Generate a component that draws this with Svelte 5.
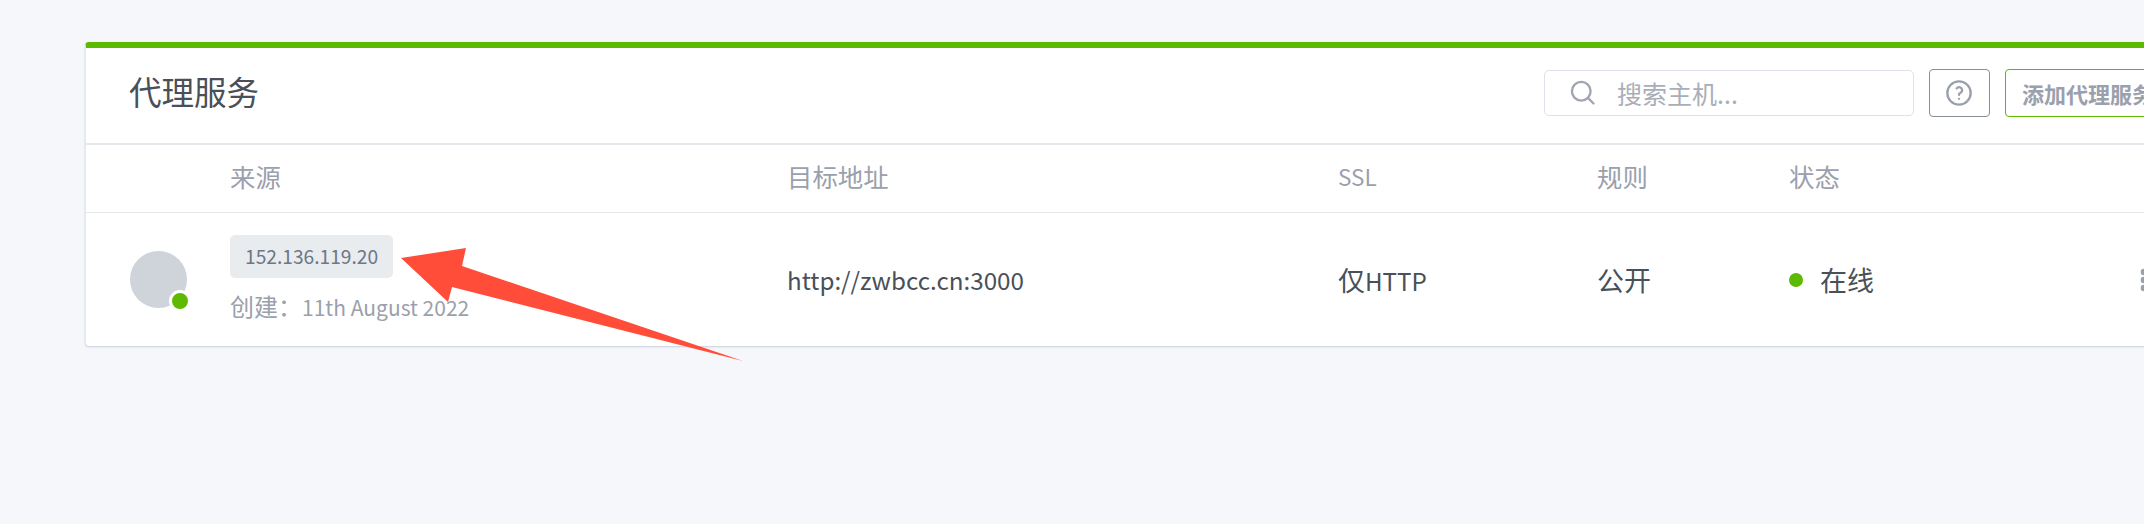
<script>
  const columns = [
    { key: 'avatar', label: '' },
    { key: 'source', label: '来源' },
    { key: 'target', label: '目标地址' },
    { key: 'ssl', label: 'SSL' },
    { key: 'rules', label: '规则' },
    { key: 'status', label: '状态' },
    { key: 'menu', label: '' }
  ];

  const host = {
    source: '152.136.119.20',
    created: '11th August 2022',
    target: 'http://zwbcc.cn:3000',
    rules: '公开',
    status: '在线'
  };
</script>

<div class="page">
  <section class="card">
    <header class="card-header">
      <h1 class="title">代理服务</h1>
      <div class="tools">
        <label class="search">
          <svg class="search-icon" viewBox="0 0 24 24" width="28" height="28" fill="none" stroke="currentColor" stroke-width="2" stroke-linecap="round" stroke-linejoin="round">
            <circle cx="10.5" cy="10.5" r="8" />
            <path d="M21 21l-4.8-4.8" />
          </svg>
          <input type="text" placeholder="搜索主机..." />
        </label>
        <button class="help" aria-label="帮助">
          <svg viewBox="0 0 24 24" width="28" height="28" fill="none" stroke="currentColor" stroke-width="2" stroke-linecap="round" stroke-linejoin="round">
            <circle cx="12" cy="12" r="10" />
            <path d="M12 17v.01" />
            <path d="M12 13.5a1.5 1.5 0 0 1 1-1.5 2.6 2.6 0 1 0-3-4" />
          </svg>
        </button>
        <button class="add">添加代理服务</button>
      </div>
    </header>

    <div class="row head">
      {#each columns as col}
        <div class="th" class:latin={col.key === 'ssl'}>{col.label}</div>
      {/each}
    </div>

    <div class="row body">
      <div class="cell">
        <span class="avatar"><span class="avatar-dot"></span></span>
      </div>
      <div class="cell source">
        <span class="tag">{host.source}</span>
        <span class="created"><span class="cjk-sm">创建：</span>{host.created}</span>
      </div>
      <div class="cell">{host.target}</div>
      <div class="cell"><span class="cjk">仅</span>HTTP</div>
      <div class="cell cjk">{host.rules}</div>
      <div class="cell status"><span class="dot"></span><span class="cjk">{host.status}</span></div>
      <div class="cell menu">
        <svg viewBox="0 0 8 24" width="8" height="24" fill="currentColor">
          <circle cx="4" cy="4" r="3.3" />
          <circle cx="4" cy="12" r="3.3" />
          <circle cx="4" cy="20" r="3.3" />
        </svg>
      </div>
    </div>
  </section>

  <!-- annotation drawn over the screenshot -->
  <svg class="arrow" viewBox="0 0 2144 524" width="2144" height="524">
    <polygon points="401,258 466,248 462,266 743,361 452,287 448,302" fill="#ff4d3a" />
  </svg>
</div>

<style>
  :global(body) {
    margin: 0;
    background: #f5f7fb;
  }

  .page {
    position: relative;
    height: 524px;
    overflow: hidden;
    padding: 42px 0 0 85px;
    box-sizing: border-box;
    font-family: "Noto Sans CJK SC", "Noto Sans", sans-serif;
    color: #495057;
  }

  .card {
    width: 2122px;
    background: #fff;
    border-top: 6px solid #5eba00;
    border-radius: 4px;
    box-shadow: 0 1px 2px rgba(110, 120, 140, 0.3);
    border-left: 1px solid #e4e7ec;
    box-sizing: border-box;
  }

  .card-header {
    height: 97px;
    display: flex;
    align-items: center;
    justify-content: space-between;
    padding: 0 36px 10px 43px;
    box-sizing: border-box;
    border-bottom: 2px solid #e4e7ec;
  }

  .title {
    margin: 0;
    font-size: 32.5px;
    font-weight: 400;
    color: #495057;
  }

  .tools {
    display: flex;
    align-items: center;
    gap: 15px;
    margin-top: 4px;
  }

  .search {
    width: 370px;
    height: 46px;
    display: flex;
    align-items: center;
    gap: 20px;
    padding-left: 24px;
    box-sizing: border-box;
    border: 1px solid #dee2e8;
    border-radius: 5px;
    color: #a0a5b1;
  }

  .search-icon { flex: none; }

  .search input {
    flex: 1;
    min-width: 0;
    border: 0;
    outline: 0;
    background: none;
    font: inherit;
    font-size: 25px;
    padding: 0;
  }
  .search input::placeholder { color: #a9aeb8; opacity: 1; }

  .help {
    width: 61px;
    height: 48px;
    display: flex;
    align-items: center;
    justify-content: center;
    padding: 0;
    background: #fff;
    border: 1px solid #868e96;
    border-radius: 4px;
    color: #9aa0ac;
  }

  .add {
    height: 48px;
    padding: 0 16px;
    background: #fff;
    border: 1px solid #5eba00;
    border-radius: 4px;
    color: #9aa0ac;
    font: inherit;
    font-size: 22px;
    font-weight: 700;
    white-space: nowrap;
  }

  .row {
    display: grid;
    grid-template-columns: 144px 557px 551px 259px 192px 351px 1fr;
    align-items: center;
  }

  .head {
    height: 68px;
    padding-bottom: 5px;
    box-sizing: border-box;
    border-bottom: 1px solid #e4e7ec;
  }

  .th {
    font-size: 25.4px;
    color: #9aa0ac;
  }
  .th.latin { font-size: 22.5px; }

  .body {
    height: 133px;
    font-size: 24.2px;
    color: #495057;
  }

  .cjk { font-size: 27px; }

  .avatar {
    position: relative;
    display: block;
    width: 57px;
    height: 57px;
    margin-left: 44px;
    border-radius: 50%;
    background: #ced4da;
  }

  .avatar-dot {
    position: absolute;
    right: -4px;
    bottom: -4px;
    width: 16px;
    height: 16px;
    border: 3px solid #fff;
    border-radius: 50%;
    background: #5eba00;
  }

  .source {
    display: flex;
    flex-direction: column;
    align-items: flex-start;
    gap: 11px;
  }

  .tag {
    height: 43px;
    line-height: 43px;
    padding: 0 15px;
    border-radius: 5px;
    background: #e9ecef;
    color: #6e7687;
    font-size: 19.2px;
  }

  .created {
    font-size: 21px;
    line-height: 34px;
    color: #9aa0ac;
  }

  .cjk-sm { font-size: 24px; }

  .status {
    display: flex;
    align-items: center;
  }

  .dot {
    width: 14px;
    height: 14px;
    margin-right: 17px;
    border-radius: 50%;
    background: #5eba00;
  }

  .menu { color: #9aa0ac; }
  .menu svg { display: block; }

  .arrow {
    position: absolute;
    left: 0;
    top: 0;
    pointer-events: none;
  }
</style>
